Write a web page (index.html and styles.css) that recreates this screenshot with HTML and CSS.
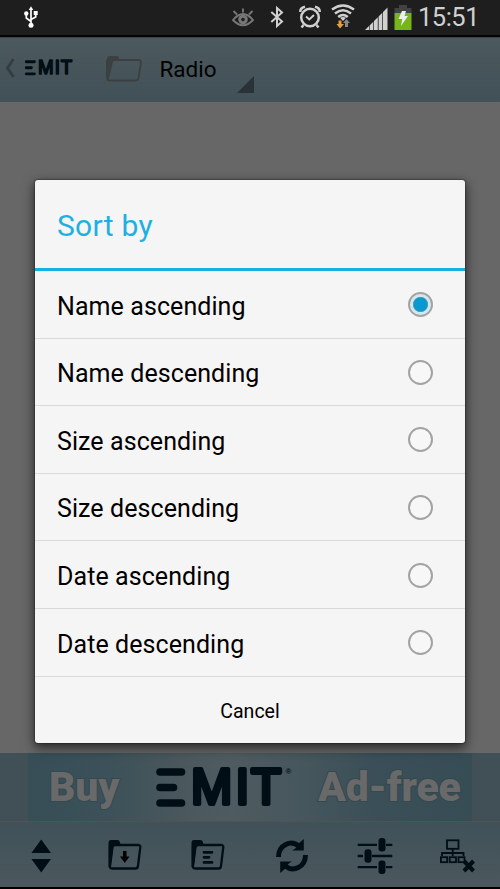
FILE: index.html
```html
<!DOCTYPE html>
<html lang="en">
<head>
<meta charset="utf-8">
<title>Radio</title>
<link rel="stylesheet" href="styles.css">
</head>
<body>
<div class="screen">
  <header class="status">
    <svg class="usb" width="16" height="22" viewBox="0 0 16 22" fill="none" stroke="#fff" stroke-width="1.7"><path d="M8 3V19M8 15.5L3.300 12V8M8 13.500L12.700 11V7"/><path d="M8 .3L10.300 4H5.700Z" fill="#fff" stroke="none"/><circle cx="8" cy="19.300" r="2.500" fill="#fff" stroke="none"/><circle cx="3.300" cy="7.500" r="2.200" fill="#fff" stroke="none"/><rect x="10.700" y="5" width="4" height="4" fill="#fff" stroke="none"/></svg>
    <svg class="eye" width="22" height="20" viewBox="0 0 22 20" fill="none" stroke="#777" stroke-width="1.900"><path d="M1 12Q6 6 11 6T21 12Q16 17.300 11 17.300T1 12Z"/><circle cx="11" cy="11.500" r="4.800" fill="#777" stroke="none"/><circle cx="11" cy="11.500" r="1.800" fill="#1e1e1e" stroke="none"/><path d="M11 .5V4.500M1.500 3L5 6.500M20.500 3L17 6.500"/></svg>
    <svg class="bt" width="14" height="22" viewBox="0 0 14 22" fill="none" stroke="#d0d0d0" stroke-width="2"><path d="M1.300 6L12 15.500L7 20V2L12 6.500L1.300 16"/></svg>
    <svg class="alarm" width="24" height="24" viewBox="0 0 24 24" fill="none" stroke="#d0d0d0" stroke-width="2.500"><circle cx="12" cy="12.500" r="8.800"/><path d="M8 11.500L11.300 14.500L16 10" stroke-width="2"/><path d="M2.300 7Q2 3 7 1.800M21.700 7Q22 3 17 1.800M5.500 20L3.500 22.500M18.500 20L20.500 22.500"/></svg>
    <svg class="wifi" width="24" height="26" viewBox="0 0 24 26" fill="none" stroke="#d0d0d0" stroke-width="2.500"><path d="M1 5.500Q12-2.500 23 5.500M4 9.500Q12 3 20 9.500M7.200 13Q12 9 16.800 13"/><path d="M9 13.800Q12 12 15 13.800L12 17Z" fill="#d0d0d0" stroke="none"/><path d="M7.500 16.500H10.500V20H13L9 24.500L5.500 20H7.500Z" fill="#e2a03d" stroke="none"/><path d="M15.500 15L19 19H17V23H14V19H12Z" fill="#888" stroke="none"/></svg>
    <svg class="signal" width="23" height="23" viewBox="0 0 23 23" fill="#d0d0d0"><path d="M0 23L4 19V23ZM4.600 18.400L8.300 14.700V23H4.600ZM9 14L12.800 10.200V23H9ZM13.600 9.400L17.300 5.700V23H13.600ZM18 5L22.500 .5V23H18Z"/></svg>
    <svg class="battery" width="18" height="25" viewBox="0 0 18 25"><path d="M5 0H13V3H17.500V8H.5V3H5Z" fill="#424242"/><path d="M.5 8H17.500V25H.5Z" fill="#76b51b"/><path d="M8 6H12L10.500 11H14L7 21L8.200 14H4.500Z" fill="#eee"/></svg>
    <span class="clock">15:51</span>
  </header>

  <nav class="actionbar">
    <svg class="back" width="10" height="20" viewBox="0 0 10 20" fill="none" stroke="#343e42" stroke-width="3"><path d="M8.500 1L2.500 10L8.500 19"/></svg>
    <svg class="logo-small" width="54" height="18" viewBox="0 0 143 46" preserveAspectRatio="none"><path d="M6 7H27.500M6 22.500H19.500M6 38H27.500" class="bars"/><text y="39.300" class="logo-text"><tspan x="37">M</tspan><tspan x="81.500">I</tspan><tspan x="97">T</tspan></text></svg>
    <svg class="folder" width="38" height="27" viewBox="0 0 38 27"><path d="M2 24V4Q2 1 5 1H12Q14 1 14 4H16Q9 5 8 7L3.500 25Z" fill="#3c4040"/><path d="M2 23V5.500Q2 5 6 5H33.500Q36.300 5 36 7.500L33.500 23Q33 25.500 30.500 25.500H4.500Q2 25.500 2.500 23L6 8" fill="none" stroke="#3c4040" stroke-width="2"/></svg>
    <span class="place">Radio</span>
    <svg class="corner" width="17" height="17" viewBox="0 0 17 17"><path d="M17 0V17H0Z" fill="#293337"/></svg>
  </nav>

  <main class="content"></main>

  <section class="promo">
    <div class="promo-inner">
      <span class="promo-word buy">Buy</span>
      <svg class="logo" width="143" height="46" viewBox="0 0 143 46"><path d="M6 7H27.500M6 22.500H19.500M6 38H27.500" class="bars"/><text y="39.300" class="logo-text"><tspan x="37">M</tspan><tspan x="81.500">I</tspan><tspan x="97">T</tspan></text><text x="131.500" y="9" class="reg">®</text></svg>
      <span class="promo-word free">Ad-free</span>
    </div>
  </section>

  <footer class="toolbar">
    <span class="tool"><svg width="36" height="36" viewBox="0 0 36 36"><path d="M17.200 1.500L27 15H7.400ZM7.400 21H27L17.200 34.500Z" fill="#020e15"/></svg></span>
    <span class="tool"><svg width="36" height="36" viewBox="0 0 36 36"><path d="M1.500 29V5Q1.500 2 4 2H10Q13 2 13 5L14 6.500Q7 7 6 10L3.500 30Z" fill="#020e15"/><path d="M3 28V8Q3 7 6 7H31Q33.500 7 33.300 9L31 28Q30.700 30.500 28.500 30.500H5Q2.500 30.500 3 28L5.500 9" fill="none" stroke="#020e15" stroke-width="2.300"/><path d="M16 13H19.500V18.500H22.500L17.800 25L13 18.500H16Z" fill="#000"/></svg></span>
    <span class="tool"><svg width="36" height="36" viewBox="0 0 36 36"><path d="M1.500 29V5Q1.500 2 4 2H10Q13 2 13 5L14 6.500Q7 7 6 10L3.500 30Z" fill="#020e15"/><path d="M3 28V8Q3 7 6 7H31Q33.500 7 33.300 9L31 28Q30.700 30.500 28.500 30.500H5Q2.500 30.500 3 28L5.500 9" fill="none" stroke="#020e15" stroke-width="2.300"/><path d="M14 14.300H22M14 19.300H19M14 24.400H22" fill="none" stroke="#020e15" stroke-width="2.800" stroke-linecap="round"/></svg></span>
    <span class="tool"><svg width="36" height="36" viewBox="0 0 36 36"><g id="turn"><path d="M4.500 19C4.500 7 17 1 25 8.500" fill="none" stroke="#020e15" stroke-width="4.900"/><path d="M29.800 1V12.500H18Q23 10.500 24 6Z" fill="#020e15"/></g><use href="#turn" transform="rotate(180 18 18)"/></svg></span>
    <span class="tool"><svg width="36" height="36" viewBox="0 0 36 36" fill="none" stroke="#020e15" stroke-width="2.300"><path d="M.7 6.800H20M29 6.800H35.300M.7 18H6M15 18H35.300M.7 29.200H20M29 29.200H35.300"/><g fill="#020e15" stroke="none"><rect x="21.500" y="0" width="7" height="13.500" rx="3"/><rect x="7.500" y="11.300" width="7" height="13.500" rx="3"/><rect x="21.500" y="22.500" width="7" height="13.500" rx="3"/></g></svg></span>
    <span class="tool"><svg width="36" height="36" viewBox="0 0 36 36" fill="none" stroke="#020e15" stroke-width="1.800"><rect x="7" y="2.300" width="11.500" height="8.500"/><path d="M12.700 11V18M2 18V15H23.500V18"/><rect x=".9" y="19.200" width="6.300" height="5"/><rect x="9.700" y="19.200" width="6.300" height="5"/><rect x="18.500" y="19.200" width="6" height="5"/><path d="M24 23L33.500 33M33.500 23L24 33" stroke-width="4"/></svg></span>
  </footer>
</div>

<div class="overlay">
  <section class="dialog" role="dialog">
    <h1 class="title">Sort by</h1>
    <ul class="options">
      <li class="option"><span class="label">Name ascending</span><i class="radio checked"></i></li>
      <li class="option"><span class="label">Name descending</span><i class="radio"></i></li>
      <li class="option"><span class="label">Size ascending</span><i class="radio"></i></li>
      <li class="option"><span class="label">Size descending</span><i class="radio"></i></li>
      <li class="option"><span class="label">Date ascending</span><i class="radio"></i></li>
      <li class="option"><span class="label">Date descending</span><i class="radio"></i></li>
    </ul>
    <button class="cancel" type="button">Cancel</button>
  </section>
</div>
</body>
</html>
```
FILE: styles.css
```css
* { box-sizing: border-box; }
body { margin: 0; font-family: Roboto, "Liberation Sans", sans-serif; background: #000; }
svg { display: block; flex: none; overflow: visible; }
.screen { width: 500px; height: 889px; display: flex; flex-direction: column; background: #000; overflow: hidden; }

.status { height: 37px; flex: none; display: flex; align-items: flex-start; background: #1e1e1e; border-bottom: 2px solid #020202; padding-left: 23px; }
.usb { margin-top: 6px; }
.eye { margin: 8px 0 0 193px; }
.bt { margin: 6px 0 0 16px; }
.alarm { margin: 5px 0 0 14px; }
.wifi { margin: 4px 0 0 9px; }
.signal { margin: 7px 0 0 10px; }
.battery { margin: 5px 0 0 6px; }
.clock { margin-left: 6px; color: #d0d0d0; font-size: 25.500px; line-height: 35px; letter-spacing: -.5px; }

.actionbar { height: 65px; flex: none; display: flex; align-items: flex-start; background: linear-gradient(#4c595e, #415157); border-top: 1px solid #34464e; border-bottom: 1px solid #4b4f50; padding-left: 5px; }
.back { margin-top: 20px; }
.logo-small { margin: 21px 0 0 8.500px; }
.bars { fill: none; stroke: #020e15; stroke-width: 7.600px; stroke-linecap: round; }
.logo-text { font: 49.500px "Liberation Sans", sans-serif; fill: #020e15; stroke: #020e15; stroke-width: 4.200px; stroke-linejoin: round; }
.folder { margin: 17px 0 0 27px; }
.place { margin-left: 17px; font-size: 22.500px; line-height: 62px; color: #000; }
.corner { margin: 38px 0 0 20px; }
.content { flex: 1; background: #676767; }

.promo { height: 69px; flex: none; display: flex; justify-content: center; background: #415056; border-bottom: 1px solid #525252; }
.promo-inner { width: 444px; display: flex; background: linear-gradient(90deg, #374e57, #3c5159 18%, #4b585d 36%, #4e5b60 46%, #47575d 60%, #3a4f58 78%, #374d56); padding-left: 21px; }
.promo-word { font-weight: 900; font-size: 41px; line-height: 68px; color: #696969; -webkit-text-stroke: 2px #34484f; paint-order: stroke fill; white-space: nowrap; letter-spacing: -.2px; }
.buy { width: 72px; }
.logo { margin: 12px 0 0 33px; }
.free { margin-left: 21px; }
.reg { font: bold 8px "Liberation Sans", sans-serif; fill: #020e15; }

.toolbar { height: 67px; flex: none; display: grid; grid-template-columns: repeat(6, 1fr); align-items: start; padding: 16px 0 0; background: linear-gradient(#405159, #4b585d); border-bottom: 2px solid #000; }
.tool { display: flex; justify-content: center; }

.overlay { position: absolute; top: 0; left: 0; width: 500px; height: 889px; display: flex; justify-content: center; padding-top: 180px; align-items: flex-start; }
.dialog { width: 430px; height: 563px; display: flex; flex-direction: column; background: #f5f5f5; border-radius: 3px; box-shadow: 0 4px 11px 1px rgba(0,0,0,.6), 0 0 1px 1px rgba(0,0,0,.25); }
.title { height: 91px; margin: 0; padding-left: 22px; border-bottom: 3px solid #14b2e3; font-size: 30px; font-weight: 400; line-height: 91px; letter-spacing: .3px; color: #1fb0e2; }
.options { list-style: none; margin: 0; padding: 0; }
.option { height: 67.600px; display: flex; align-items: center; justify-content: space-between; border-bottom: 1px solid #dadada; padding: 1px 32px 0 22px; }
.label { padding-top: 3.500px; font-size: 25px; line-height: 30px; color: #000; white-space: nowrap; letter-spacing: .08px; }
.radio { width: 25px; height: 25px; border: 2px solid #a3a3a3; border-radius: 50%; background: #f7f7f7; }
.checked { background: radial-gradient(circle, #0799d0 0 6.500px, #6b9fb3 7.300px, #cfe8f2 8px 9.500px, #e2f0f5 11px); }
.cancel { flex: 1; border: 0; padding: 3px 0 0; background: none; color: #000; font: 400 19.500px Roboto, sans-serif; }
```
